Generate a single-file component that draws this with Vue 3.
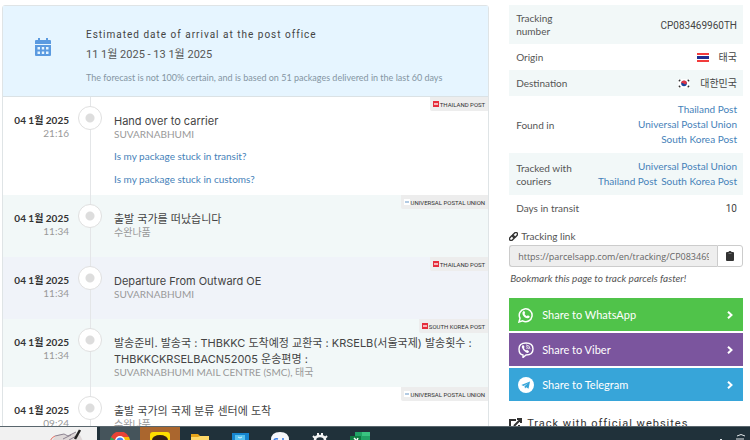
<template>
    <div class="screen">
        <main class="page">
            <section class="history">
                <header class="forecast">
                    <svg class="calendar" viewBox="0 0 16 18" aria-hidden="true">
                        <path d="M3 0h2v2h6V0h2v2h2q1 0 1 1v3H0V3q0-1 1-1h2z" />
                        <path fill-rule="evenodd" d="M0 7h16v10q0 1-1 1H1q-1 0-1-1zm2.500 2v2.500H5V9zm4.300 0v2.500h2.400V9zM11 9v2.500h2.500V9zm-8.500 4.500V16H5v-2.500zm4.300 0V16h2.400v-2.500zm4.200 0V16h2.500v-2.500z" />
                    </svg>
                    <div class="forecast-text">
                        <h2>Estimated date of arrival at the post office</h2>
                        <p class="range">11 1월 2025 - 13 1월 2025</p>
                        <p class="note">The forecast is not 100% certain, and is based on 51 packages delivered in the last 60 days</p>
                    </div>
                </header>
                <ul class="events">
                    <li v-for="(event, index) in events" :key="index" class="event" :class="event.tone">
                        <div class="when">
                            <strong>04 1월 2025</strong>
                            <span>{{ event.time }}</span>
                        </div>
                        <div class="track"><i class="dot"></i></div>
                        <div class="what">
                            <h3>{{ event.title }}</h3>
                            <p>{{ event.place }}</p>
                            <a v-for="question in event.questions" :key="question" href="#">{{ question }}</a>
                        </div>
                        <span class="carrier">
                            <svg viewBox="0 0 6 6" :class="event.logo" aria-hidden="true">
                                <rect width="6" height="6" />
                                <path d="M1 2h4v2H1z" />
                            </svg>{{ event.carrier }}
                        </span>
                    </li>
                </ul>
            </section>

            <aside class="side">
                <table class="details">
                    <tbody>
                        <tr>
                            <th scope="row">Tracking number</th>
                            <td>CP083469960TH</td>
                        </tr>
                        <tr>
                            <th scope="row">Origin</th>
                            <td>
                                <svg class="flag" viewBox="0 0 12 9" aria-hidden="true">
                                    <path fill="#f23c3c" d="M0 0h12v9H0z" />
                                    <path fill="#fff" d="M0 2h12v5H0z" />
                                    <path fill="#202e91" d="M0 3h12v3H0z" />
                                </svg>태국
                            </td>
                        </tr>
                        <tr>
                            <th scope="row">Destination</th>
                            <td>
                                <svg class="flag" viewBox="0 0 12 9" aria-hidden="true">
                                    <path fill="#fff" d="M0 0h12v9H0z" />
                                    <circle cx="6" cy="4.500" r="2.800" fill="#19459c" />
                                    <path fill="#dc3545" d="M3.200 4.300A2.800 2.800 0 0 1 8.800 4.500Q7.500 6 6 4.700T3.200 4.300z" />
                                    <path stroke="#333" stroke-width="1.300" d="M.8 2.200 2.300.8M9.700.8l1.500 1.400M.8 6.800l1.500 1.400M9.700 8.200l1.500-1.400" />
                                </svg>대한민국
                            </td>
                        </tr>
                        <tr>
                            <th scope="row">Found in</th>
                            <td class="links">
                                <a href="#">Thailand Post</a><br>
                                <a href="#">Universal Postal Union</a><br>
                                <a href="#">South Korea Post</a>
                            </td>
                        </tr>
                        <tr>
                            <th scope="row">Tracked with couriers</th>
                            <td class="links">
                                <a href="#">Universal Postal Union</a><br>
                                <a href="#">Thailand Post</a>
                                <a href="#" class="next">South Korea Post</a>
                            </td>
                        </tr>
                        <tr>
                            <th scope="row">Days in transit</th>
                            <td>10</td>
                        </tr>
                    </tbody>
                </table>

                <label class="link-label" for="tracking-link">
                    <svg viewBox="0 0 16 16" aria-hidden="true">
                        <g transform="rotate(-45 8 8)" fill="none" stroke="#333" stroke-width="2.500">
                            <rect x="-1" y="5" width="10" height="6" rx="3" />
                            <rect x="7" y="5" width="10" height="6" rx="3" />
                        </g>
                    </svg>Tracking link
                </label>
                <div class="link-row">
                    <input id="tracking-link" type="text" readonly value="https://parcelsapp.com/en/tracking/CP083469960TH">
                    <button type="button" aria-label="Copy link">
                        <svg viewBox="0 0 8 10" aria-hidden="true">
                            <path d="M1 1h1.500q0-1 1.500-1t1.500 1H7q1 0 1 1v7q0 1-1 1H1q-1 0-1-1V2q0-1 1-1z" />
                            <path fill="#999" d="M2.500 2h3v.6h-3z" />
                        </svg>
                    </button>
                </div>
                <p class="bookmark">Bookmark this page to track parcels faster!</p>

                <div class="shares">
                    <a href="#" class="share whatsapp">
                        <svg class="brand" viewBox="0 0 16 16" aria-hidden="true">
                            <path fill="none" stroke="#fff" stroke-width="1.500" d="M1 15l1-3.800a6.400 6.400 0 1 1 2.700 2.700z" />
                            <path fill="#fff" d="M5.300 4.200l1-.1.900 2-.7.900q.8 1.500 2.400 2.200l.9-1 1.900 1q.1 2-2 2.100Q6.200 11 4.500 7.200 4 5.300 5.300 4.200z" />
                        </svg>
                        <span>Share to WhatsApp</span>
                        <svg class="chevron" viewBox="0 0 6 8" aria-hidden="true"><path d="M1 0.700 4.500 4 1 7.300" /></svg>
                    </a>
                    <a href="#" class="share viber">
                        <svg class="brand" viewBox="0 0 16 16" aria-hidden="true">
                            <path fill="none" stroke="#fff" stroke-width="1.400" d="M5 13q-4-.5-4-6 0-6 7-6t7 6-7 6l-3 2.500z" />
                            <path fill="#fff" d="M4.300 3.500l1-.4 1.300 2-.7 1q.5 1.800 2.300 2.500l.8-.8 2 1.500-.4 1.200q-1 .8-2.500 0-3.300-1.900-4.300-5.200-.1-1.200.5-1.800z" />
                            <path fill="none" stroke="#fff" stroke-width=".8" d="M8 2.900q4 .2 4.100 4.300M8.200 4.500q2.200.2 2.300 2.600M8.400 6q.7.100.8 1" />
                        </svg>
                        <span>Share to Viber</span>
                        <svg class="chevron" viewBox="0 0 6 8" aria-hidden="true"><path d="M1 0.700 4.500 4 1 7.300" /></svg>
                    </a>
                    <a href="#" class="share telegram">
                        <svg class="brand" viewBox="0 0 16 16" aria-hidden="true">
                            <circle cx="8" cy="8" r="8" fill="#fff" />
                            <path fill="#37a5d9" d="M3.300 7.900 12 4.500l-1.500 7.300-2.300-1.600-1.200 1.300-.5-2.200L10 6.300 5.600 8.900z" />
                        </svg>
                        <span>Share to Telegram</span>
                        <svg class="chevron" viewBox="0 0 6 8" aria-hidden="true"><path d="M1 0.700 4.500 4 1 7.300" /></svg>
                    </a>
                </div>

                <h2 class="official">
                    <svg viewBox="0 0 13 12" aria-hidden="true">
                        <path d="M7 2H1v9h9V7M5 8l6.500-6.500M8 1h4v4" />
                    </svg>Track with official websites
                </h2>
            </aside>
        </main>

        <footer class="taskbar">
            <div class="search">
                <svg viewBox="0 0 44 14" aria-hidden="true">
                    <path fill="#ded8d8" d="M7 14Q10 7 18 7l4 2q7-5 13-1l3 6z" />
                    <path fill="none" stroke="#e56b5e" d="M5 14q2-4 5-5" />
                    <path fill="none" stroke="#8c8290" d="M10 9l9-2 4 2 8-4M18 12l8-4M24 13l9-5" />
                    <path stroke="#222" stroke-width="2.500" d="M30 12 35 3" />
                </svg>
            </div>
            <div class="task chrome">
                <svg viewBox="0 0 20 8" aria-hidden="true">
                    <path fill="#e94235" d="M1 5a10 10 0 0 1 18 0v3H1z" />
                    <path fill="#34a853" d="M1 5l4 3H0z" />
                    <path fill="#fbbc05" d="M11 5h8l1 3h-9z" />
                    <circle cx="10" cy="9" r="5" fill="#fff" />
                    <circle cx="10" cy="9" r="3.500" fill="#4285f4" />
                </svg>
            </div>
            <div class="task talk">
                <svg viewBox="0 0 20 8" aria-hidden="true">
                    <path fill="#ffdf00" d="M0 8V3q0-3 3-3h14q3 0 3 3v5z" />
                    <ellipse cx="10" cy="8" rx="8" ry="5" fill="#302118" />
                </svg>
            </div>
            <div class="task">
                <svg viewBox="0 0 20 8" aria-hidden="true">
                    <path fill="#e7a51b" d="M1 2h7l2 2h9v4H1z" />
                    <path fill="#ffd968" d="M1 5h7l2-1h9v4H1z" />
                </svg>
            </div>
            <div class="task">
                <svg viewBox="0 0 20 8" aria-hidden="true">
                    <path fill="#1684ce" d="M2 1h17v7H2z" />
                    <path fill="#55c1ef" d="M5 3h10v5H5z" />
                    <path fill="none" stroke="#d9f3ff" d="M8 5q2 2 4 0" />
                </svg>
            </div>
            <div class="task">
                <svg viewBox="0 0 20 8" aria-hidden="true">
                    <path fill="#f6f7fb" d="M1 8q0-8 9-8t9 8z" />
                    <path fill="none" stroke="#347be8" stroke-width="1.500" d="M4 8q1-2 4-1M13 6v2" />
                </svg>
            </div>
            <div class="task">
                <svg viewBox="0 0 20 8" aria-hidden="true">
                    <path fill="none" stroke="#f4f4f4" stroke-width="2.500" d="M5 8q0-4 5-4t5 4" />
                    <path stroke="#f4f4f4" stroke-width="2" d="M8 4V1M12 4V1M5 6 3 4M15 6l2-2" />
                </svg>
            </div>
            <div class="task">
                <svg viewBox="0 0 20 8" aria-hidden="true">
                    <path fill="#21a366" d="M5 0h15v8H5z" />
                    <path fill="#39c481" d="M12 0h8v4h-8z" />
                    <path fill="#107c41" d="M0 4h11v4H0z" />
                    <path stroke="#fff" stroke-width="1.500" d="M4 6l2 2M8 6 7 8" />
                </svg>
            </div>
            <svg class="tray" viewBox="0 0 26 8" aria-hidden="true">
                <path fill="none" stroke="#e2e7e9" d="M1 8l1-1 1 1M18 4q4-3 8 0M17 7h8" />
            </svg>
        </footer>
    </div>
</template>

<script setup>
const events = [
    {
        time: '21:16',
        title: 'Hand over to carrier',
        place: 'SUVARNABHUMI',
        questions: ['Is my package stuck in transit?', 'Is my package stuck in customs?'],
        carrier: 'THAILAND POST',
        logo: 'red'
    },
    {
        time: '11:34',
        title: '출발 국가를 떠났습니다',
        place: '수완나품',
        carrier: 'UNIVERSAL POSTAL UNION',
        logo: 'pale',
        tone: 'mint'
    },
    {
        time: '11:34',
        title: 'Departure From Outward OE',
        place: 'SUVARNABHUMI',
        carrier: 'THAILAND POST',
        logo: 'red',
        tone: 'blue'
    },
    {
        time: '11:34',
        title: '발송준비. 발송국 : THBKKC 도착예정 교환국 : KRSELB(서울국제) 발송횟수 : THBKKCKRSELBACN52005 운송편명 :',
        place: 'SUVARNABHUMI MAIL CENTRE (SMC), 태국',
        carrier: 'SOUTH KOREA POST',
        logo: 'red',
        tone: 'mint'
    },
    {
        time: '09:24',
        title: '출발 국가의 국제 분류 센터에 도착',
        place: '수완나품',
        carrier: 'UNIVERSAL POSTAL UNION',
        logo: 'pale'
    }
]
</script>

<style>
body {
    margin: 0;
    background: #fff;
}
</style>

<style scoped>
.screen {
    display: flex;
    flex-direction: column;
    height: 100vh;
    overflow: hidden;
    font-family: Lato, "Noto Sans CJK KR", sans-serif;
    font-size: 10px;
    line-height: 13px;
    color: #555;
}

.screen * {
    box-sizing: border-box;
}

h2,
h3,
p {
    margin: 0;
    font-weight: 400;
}

a {
    color: #4682b9;
    text-decoration: none;
}

.page {
    display: grid;
    grid-template-columns: 25fr 12fr;
    align-items: start;
    gap: 20px;
    flex: 1;
    min-height: 0;
    overflow: hidden;
    padding: 5px 7px 0 2px;
}

/* Event history */
.history {
    border: 1px solid #dfe4e6;
    border-radius: 3px;
}

.forecast {
    display: flex;
    align-items: flex-start;
    height: 91px;
    padding: 20px 0 0 32px;
    border-bottom: 1px solid #dbe2e5;
    background: #e6f5ff;
}

.calendar {
    width: 16px;
    height: 18px;
    margin-top: 12px;
    fill: #5b9ae0;
}

.forecast-text {
    margin-left: 35px;
}

.forecast h2 {
    font-family: Roboto, sans-serif;
    font-size: 10px;
    line-height: 18px;
    letter-spacing: 1px;
    color: #444;
}

.range {
    font-family: Roboto, "Noto Sans CJK KR", sans-serif;
    font-size: 11px;
    line-height: 22px;
}

.note {
    font-size: 9px;
    line-height: 24px;
    color: #8596a3;
}

.events {
    margin: 0;
    padding: 0;
    list-style: none;
}

.event {
    position: relative;
    display: flex;
    min-height: 62px;
}

.event.mint {
    background: #f2f8f8;
}

.event.blue {
    background: #f0f3f9;
}

.when {
    width: 66px;
    padding-top: 17px;
    text-align: right;
    color: #999;
}

.when strong,
.when span {
    display: block;
}

.when strong {
    color: #333;
}

.track {
    display: flex;
    justify-content: center;
    width: 24px;
    margin: 0 12px 0 9px;
    padding-top: 9px;
    background: linear-gradient(#e4e6e8, #e4e6e8) center / 1px 100% no-repeat;
}

.dot {
    width: 24px;
    height: 24px;
    border: 1px solid #e0e0e0;
    border-radius: 50%;
    background: radial-gradient(circle, #ddd 4px, #fff 5px);
}

.what {
    flex: 1;
    padding: 16px 4px 9px 0;
}

.what h3 {
    font-family: Inter, "Noto Sans CJK KR", sans-serif;
    font-size: 11px;
    line-height: 16px;
    color: #444;
    word-break: keep-all;
}

.what p {
    line-height: 11px;
    color: #999;
}

.what a {
    display: block;
    margin-top: 10px;
}

.carrier {
    position: absolute;
    top: 0;
    right: 0;
    display: flex;
    align-items: center;
    gap: 1px;
    height: 14px;
    padding: 0 3px;
    border-bottom-left-radius: 2px;
    background: #ededed;
    font-family: Roboto, sans-serif;
    font-size: 6px;
    white-space: nowrap;
    color: #333;
}

.carrier svg {
    width: 6px;
    height: 6px;
}

.carrier .red {
    fill: #e52d3b;
}

.carrier .pale {
    fill: #fff;
}

.carrier .red path {
    fill: #f7b5ba;
}

.carrier .pale path {
    fill: #b3cbe3;
}

/* Parcel details */
.details {
    width: 100%;
    border-collapse: collapse;
}

.details tr:nth-child(odd) {
    background: #f2f8f8;
}

.details th,
.details td {
    padding: 7px 6px 6px;
}

.details th {
    width: 80px;
    padding-left: 7px;
    font-weight: 400;
    text-align: left;
}

.details td {
    font-family: Roboto, "Noto Sans CJK KR", sans-serif;
    text-align: right;
    color: #444;
}

.details .links {
    padding: 6px;
    font-family: Lato, sans-serif;
    line-height: 15px;
}

.next {
    margin-left: 4px;
}

.flag {
    width: 12px;
    height: 9px;
    margin-right: 10px;
    vertical-align: -1px;
}

.link-label {
    display: flex;
    align-items: center;
    gap: 3px;
    margin-top: 9px;
}

.link-label svg {
    width: 9px;
    height: 9px;
}

.link-row {
    display: flex;
    height: 22px;
    margin-top: 2px;
}

.link-row input {
    flex: 1;
    min-width: 0;
    padding: 0 8px;
    border: 1px solid #ccc;
    border-right: 0;
    border-radius: 3px 0 0 3px;
    background: #eee;
    font-family: "Open Sans", sans-serif;
    font-size: 9px;
    color: #666;
}

.link-row button {
    display: flex;
    align-items: center;
    justify-content: center;
    width: 26px;
    padding: 0;
    border: 1px solid #ccc;
    border-radius: 0 3px 3px 0;
    background: #fff;
    fill: #333;
}

.link-row button svg {
    width: 8px;
    height: 10px;
}

.bookmark {
    margin: 5px 0 13px;
    padding-left: 1px;
    font-style: italic;
}

.shares {
    display: grid;
    gap: 2px;
}

.share {
    display: flex;
    align-items: center;
    height: 33px;
    padding: 0 10px 0 9px;
    font-size: 11px;
    color: #fff;
}

.share span {
    flex: 1;
    margin-left: 8px;
}

.brand {
    width: 16px;
    height: 16px;
}

.chevron {
    width: 6px;
    height: 8px;
    fill: none;
    stroke: #fff;
    stroke-width: 2;
}

.whatsapp {
    background: #50c34a;
}

.viber {
    background: #7b559e;
}

.telegram {
    background: #37a5d9;
}

.official {
    display: flex;
    align-items: center;
    gap: 5px;
    margin-top: 15px;
    font-family: Roboto, sans-serif;
    font-size: 11px;
    line-height: 16px;
    letter-spacing: 1px;
    color: #333;
}

.official svg {
    width: 13px;
    height: 12px;
    fill: none;
    stroke: #333;
    stroke-width: 2;
}

/* Desktop taskbar */
.taskbar {
    display: flex;
    flex: none;
    height: 14px;
    border-top: 1px solid #59666d;
    background: #20313a;
}

.search {
    width: 97px;
    padding-left: 45px;
    background: #f1f1f1;
}

.search svg {
    display: block;
    width: 44px;
    height: 14px;
}

.task {
    display: flex;
    justify-content: center;
    align-items: flex-end;
    width: 40px;
}

.task svg {
    width: 20px;
    height: 8px;
}

.chrome {
    margin-left: 3px;
    background: #45545b;
}

.talk {
    background: #aa662e;
}

.tray {
    align-self: flex-end;
    width: 26px;
    height: 8px;
    margin-left: auto;
    margin-right: 5px;
}
</style>
